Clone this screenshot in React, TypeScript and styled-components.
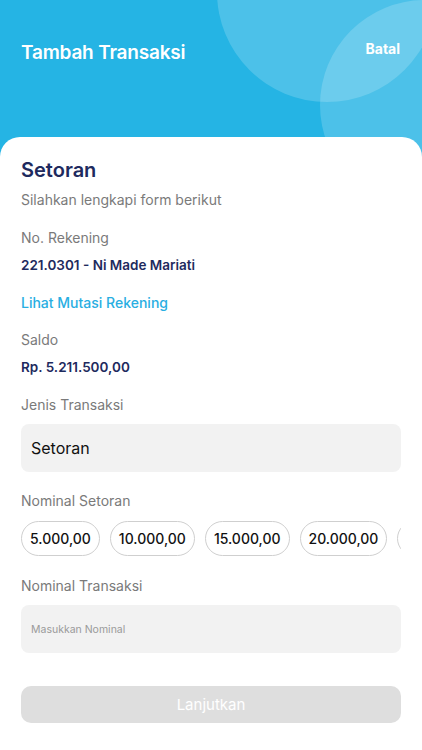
import styled, { createGlobalStyle } from "styled-components";

const GlobalStyle = createGlobalStyle`
  html, body {
    margin: 0;
    padding: 0;
    background: #ffffff;
  }
  body {
    font-family: Inter, Roboto, "Noto Sans", sans-serif;
  }
  * {
    box-sizing: border-box;
  }
`;

const Screen = styled.div`
  width: 422px;
  height: 750px;
  background: #25b4e4;
  display: flex;
  flex-direction: column;
  overflow: hidden;
`;

const Header = styled.div`
  position: relative;
  height: 137px;
  flex-shrink: 0;
  display: flex;
  justify-content: space-between;
  align-items: flex-start;
  padding: 39px 22px 0 21px;
`;

const Bubble = styled.div<{ $x: number; $y: number; $r: number }>`
  position: absolute;
  left: ${(p) => p.$x - p.$r}px;
  top: ${(p) => p.$y - p.$r}px;
  width: ${(p) => p.$r * 2}px;
  height: ${(p) => p.$r * 2}px;
  border-radius: 50%;
  background: rgba(255, 255, 255, 0.18);
  pointer-events: none;
`;

const Title = styled.h1`
  position: relative;
  margin: 0;
  font-size: 19px;
  line-height: 28px;
  font-weight: 600;
  color: #ffffff;
  letter-spacing: -0.2px;
`;

const CancelButton = styled.button`
  position: relative;
  border: none;
  background: none;
  padding: 0;
  margin-top: 0;
  font-family: inherit;
  font-size: 14px;
  line-height: 20px;
  font-weight: 700;
  color: #ffffff;
`;

const Card = styled.div`
  position: relative;
  flex: 1;
  background: #ffffff;
  border-radius: 20px 20px 0 0;
  padding: 20px 21px 0 21px;
  display: flex;
  flex-direction: column;
`;

const Heading = styled.h2`
  margin: 0;
  font-size: 20px;
  line-height: 26px;
  font-weight: 600;
  color: #1e2a5e;
`;

const Label = styled.div<{ $gap?: number }>`
  margin-top: ${(p) => p.$gap ?? 18}px;
  font-size: 14px;
  line-height: 20px;
  font-weight: 400;
  color: #7a7a7a;
`;

const Value = styled.div`
  margin-top: 7px;
  font-size: 13.5px;
  line-height: 20px;
  font-weight: 600;
  color: #1e2a5e;
`;

const LinkText = styled.a`
  margin-top: 18px;
  font-size: 14px;
  line-height: 20px;
  font-weight: 500;
  color: #29aee2;
  text-decoration: none;
`;

const Field = styled.div<{ $small?: boolean }>`
  margin-top: 9px;
  height: 48px;
  border-radius: 8px;
  background: #f2f2f2;
  display: flex;
  align-items: center;
  padding: 0 10px;
  font-size: ${(p) => (p.$small ? "10.5px" : "16px")};
  color: ${(p) => (p.$small ? "#9a9a9a" : "#111111")};
`;

const ChipRow = styled.div`
  margin-top: 10px;
  display: flex;
  gap: 10px;
  overflow: hidden;
`;

const Chip = styled.div`
  flex-shrink: 0;
  height: 35px;
  padding: 0 8px;
  border: 1px solid #cfcfcf;
  border-radius: 18px;
  display: flex;
  align-items: center;
  font-size: 14px;
  font-weight: 500;
  color: #111111;
`;

const SubmitButton = styled.button`
  margin-top: 33px;
  height: 37px;
  border: none;
  border-radius: 10px;
  background: #dedede;
  color: #ffffff;
  font-family: inherit;
  font-size: 15px;
  font-weight: 400;
`;

const amounts = ["5.000,00", "10.000,00", "15.000,00", "20.000,00", "25.000,00"];

export default function App() {
  return (
    <>
      <GlobalStyle />
      <Screen>
        <Header>
          <Bubble $x={327} $y={-8} $r={110} />
          <Bubble $x={425} $y={105} $r={105} />
          <Title>Tambah Transaksi</Title>
          <CancelButton>Batal</CancelButton>
        </Header>
        <Card>
          <Heading>Setoran</Heading>
          <Label $gap={7}>Silahkan lengkapi form berikut</Label>
          <Label>No. Rekening</Label>
          <Value>221.0301 - Ni Made Mariati</Value>
          <LinkText>Lihat Mutasi Rekening</LinkText>
          <Label $gap={17}>Saldo</Label>
          <Value>Rp. 5.211.500,00</Value>
          <Label>Jenis Transaksi</Label>
          <Field>Setoran</Field>
          <Label $gap={19}>Nominal Setoran</Label>
          <ChipRow>
            {amounts.map((a) => (
              <Chip key={a}>{a}</Chip>
            ))}
          </ChipRow>
          <Label $gap={20}>Nominal Transaksi</Label>
          <Field $small>Masukkan Nominal</Field>
          <SubmitButton>Lanjutkan</SubmitButton>
        </Card>
      </Screen>
    </>
  );
}
